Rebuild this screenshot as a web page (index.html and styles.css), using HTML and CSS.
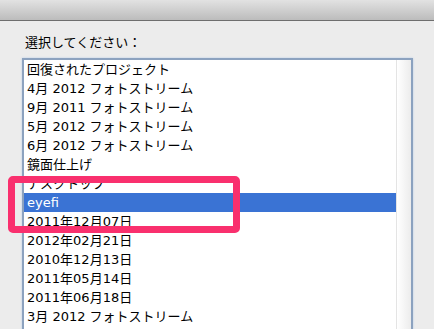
FILE: index.html
```html
<!DOCTYPE html>
<html lang="ja">
<head>
    <meta charset="UTF-8">
    <meta name="viewport" content="width=device-width, initial-scale=1.0">
    <title>選択してください</title>
    <link rel="stylesheet" href="styles.css">
</head>
<body>
    <div class="titlebar"></div>

    <div class="content">
        <div class="label">選択してください：</div>

        <div class="listbox">
            <ul class="list">
                <li>回復されたプロジェクト</li>
                <li>4月 2012 フォトストリーム</li>
                <li>9月 2011 フォトストリーム</li>
                <li>5月 2012 フォトストリーム</li>
                <li>6月 2012 フォトストリーム</li>
                <li>鏡面仕上げ</li>
                <li>デスクトップ</li>
                <li class="selected">eyefi</li>
                <li>2011年12月07日</li>
                <li>2012年02月21日</li>
                <li>2010年12月13日</li>
                <li>2011年05月14日</li>
                <li>2011年06月18日</li>
                <li>3月 2012 フォトストリーム</li>
            </ul>
            <div class="scrolltrack"></div>
        </div>
    </div>

    <!-- 注釈の枠 -->
    <div class="highlight"></div>
</body>
</html>
```

FILE: styles.css
```css
body {
    margin: 0;
    height: 329px;
    overflow: hidden;
    background: #ececec;
    font-family: "DejaVu Sans", "Noto Sans CJK JP", sans-serif;
    font-size: 13px;
    color: #000;
}
.titlebar {
    height: 20px;
    background: linear-gradient(to bottom, #e2e2e2, #bcbcbc);
    border-bottom: 1px solid #6e6e6e;
}
.content {
    padding: 12px 21px 0 22px;
}
.label {
    padding-left: 3px;
    line-height: 19px;
}
.listbox {
    display: flex;
    margin-top: 6px;
    height: 280px;
    border: 2px solid #8ca2bf;
    border-bottom: none;
    box-shadow: 0 0 2px #b7cde8;
    background: #fff;
    overflow: hidden;
}
.list {
    flex: 1;
    list-style: none;
    margin: 0;
    padding: 0;
}
.list li {
    height: 19px;
    line-height: 19px;
    padding-left: 3px;
    white-space: nowrap;
}
.list li.selected {
    background: #3a73d4;
    color: #fff;
}
.scrolltrack {
    width: 14px;
    border-left: 1px solid #e4e4e4;
    background: linear-gradient(to right, #ffffff, #ececec);
}
.highlight {
    position: absolute;
    left: 8px;
    top: 176px;
    width: 232px;
    height: 57px;
    box-sizing: border-box;
    border: 7px solid #f9306e;
    border-radius: 5px;
}
```
